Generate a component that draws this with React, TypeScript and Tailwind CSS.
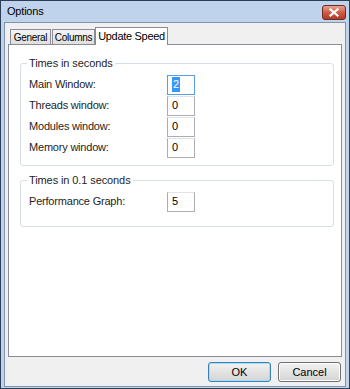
import React from "react";

const rows = [
  { label: "Main Window:", value: "2", focused: true },
  { label: "Threads window:", value: "0" },
  { label: "Modules window:", value: "0" },
  { label: "Memory window:", value: "0" },
];

function EditBox({ value, focused }: { value: string; focused?: boolean }) {
  return (
    <div
      className={
        "w-[28px] h-[20px] bg-white flex items-center pl-[4px] text-[11px] leading-none border " +
        (focused ? "border-[#569de5]" : "border-[#abadb3] border-t-[#e2e3ea]")
      }
    >
      {focused ? (
        <span className="bg-[#3399ff] text-white px-[1px] py-[2px]">{value}</span>
      ) : (
        <span className="text-black">{value}</span>
      )}
    </div>
  );
}

function Field({ label, value, focused }: { label: string; value: string; focused?: boolean }) {
  return (
    <div className="flex items-center h-[21px]">
      <span className="w-[138px] text-[11px] tracking-[-0.2px] text-[#1e1e1e]">{label}</span>
      <EditBox value={value} focused={focused} />
    </div>
  );
}

export default function App() {
  return (
    <div
      className="w-[350px] h-[389px] bg-[#bfd3ec] border border-[#2c3e55] flex flex-col px-[3px] pb-[3px] select-none"
      style={{ fontFamily: '"Liberation Sans", Arial, sans-serif' }}
    >
      {/* Title bar */}
      <div className="h-[21px] flex items-center justify-between shrink-0">
        <span className="pl-[3px] text-[11px] tracking-[-0.2px] text-black">Options</span>
        <div className="w-[24px] h-[15px] mt-[2px] rounded-[3px] border border-[#6d2b22] bg-gradient-to-b from-[#e8a493] via-[#cf5b45] to-[#b23a26] flex items-center justify-center">
          <svg width="10" height="9" viewBox="0 0 10 9">
            <path d="M1.5 1.5 L8.5 7.5 M8.5 1.5 L1.5 7.5" stroke="#fff" strokeWidth="2.2" strokeLinecap="square" />
          </svg>
        </div>
      </div>

      {/* Client area */}
      <div className="flex-1 bg-[#f0f0f0] border border-[#7f93ad] flex flex-col px-[3px] pt-[1px] pb-[4px]">
        {/* Tabs */}
        <div className="flex items-end h-[20px] pl-[2px] relative z-10">
          <div className="w-[41px] h-[15px] border border-[#898c95] border-b-0 bg-gradient-to-b from-[#f4f4f4] to-[#dedede] text-[10px] tracking-[-0.3px] flex items-center justify-center">
            General
          </div>
          <div className="w-[43px] h-[15px] ml-[1px] border border-[#898c95] border-b-0 bg-gradient-to-b from-[#f4f4f4] to-[#dedede] text-[10px] tracking-[-0.3px] flex items-center justify-center">
            Columns
          </div>
          <div className="w-[73px] h-[18px] -mb-px border border-[#898c95] border-b-0 bg-white text-[11px] tracking-[-0.3px] flex items-center justify-center">
            Update Speed
          </div>
        </div>

        {/* Panel */}
        <div className="h-[313px] bg-white border border-[#898c95] pt-[12px] pl-[11px] pr-[7px] flex flex-col gap-[8px]">
          <fieldset className="border border-[#d5dfe5] rounded-[3px] pl-[8px] pb-[7px] pt-[4px]">
            <legend className="ml-[-2px] px-[2px] text-[11px] tracking-[-0.1px] text-[#1e1e1e] leading-[13px]">Times in seconds</legend>
            {rows.map((r) => (
              <Field key={r.label} label={r.label} value={r.value} focused={r.focused} />
            ))}
          </fieldset>
          <fieldset className="border border-[#d5dfe5] rounded-[3px] pl-[8px] pb-[14px] pt-[4px]">
            <legend className="ml-[-2px] px-[2px] text-[11px] tracking-[-0.1px] text-[#1e1e1e] leading-[13px]">Times in 0.1 seconds</legend>
            <Field label="Performance Graph:" value="5" />
          </fieldset>
        </div>

        {/* Buttons */}
        <div className="flex justify-end gap-[7px] mt-[5px] pr-[1px]">
          <button className="w-[63px] h-[20px] rounded-[3px] border border-[#3c7fb1] bg-gradient-to-b from-[#f2f2f2] to-[#d4d4d4] text-[11px] text-black shadow-[inset_0_0_0_1px_#9fe0f9]">
            OK
          </button>
          <button className="w-[63px] h-[20px] rounded-[3px] border border-[#707070] bg-gradient-to-b from-[#f2f2f2] to-[#d4d4d4] text-[11px] text-black shadow-[inset_0_0_0_1px_#fcfcfc]">
            Cancel
          </button>
        </div>
      </div>
    </div>
  );
}
